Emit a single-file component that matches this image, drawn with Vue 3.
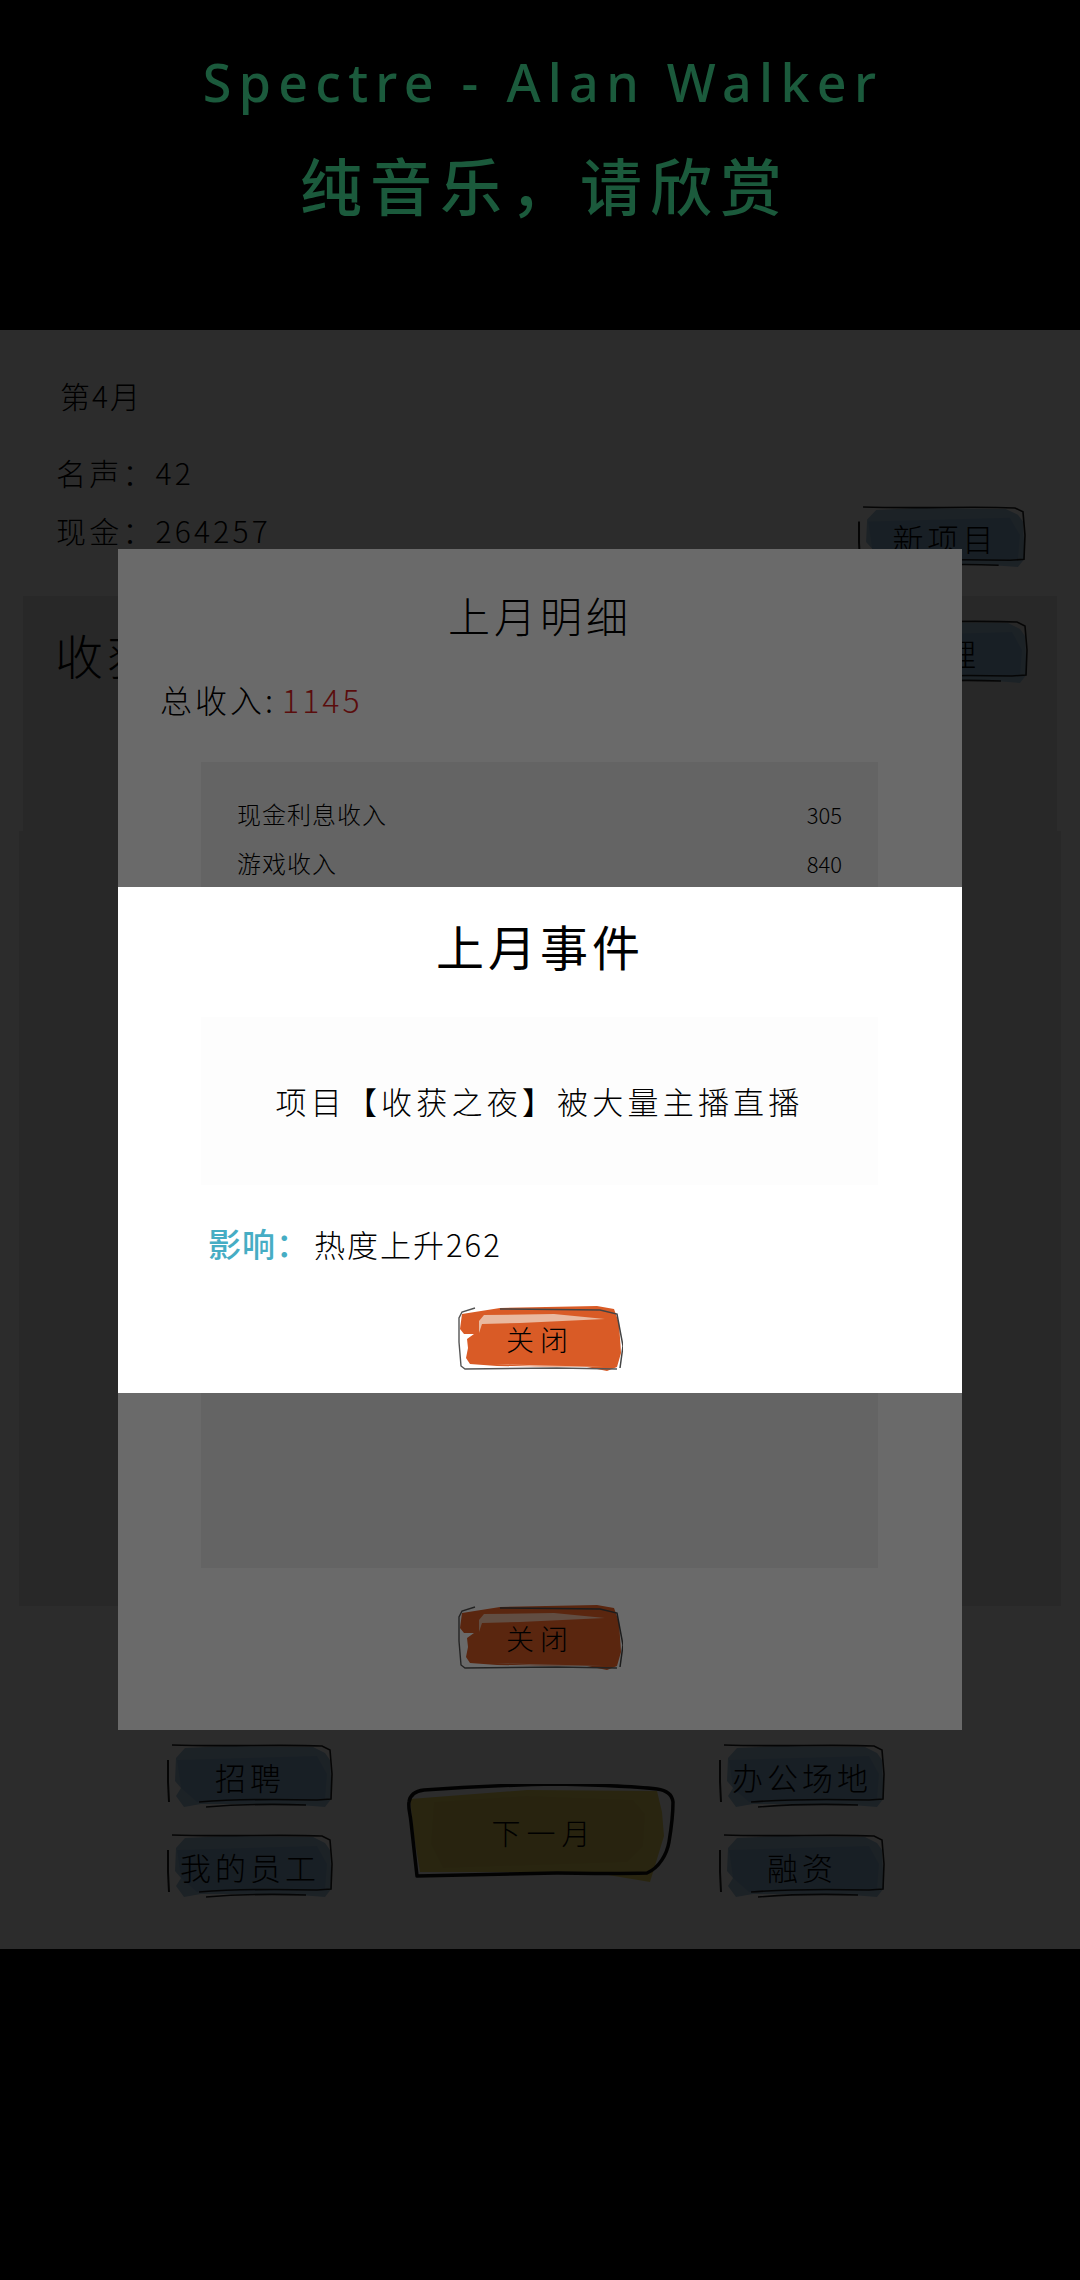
<template>
  <div class="screen">
    <!-- Shared hand drawn button art -->
    <svg class="sprites" width="0" height="0" aria-hidden="true">
      <symbol id="btn-blue" viewBox="0 0 166 66" preserveAspectRatio="none">
        <path d="M9 14 L18 4 L60 2 L146 3 L158 9 L163 16 L165 54 L158 63 L120 60 L34 60 L17 63 L9 52 L14 44 L8 37 Z" fill="#a5c6de" />
        <path d="M10 16 L150 12 L160 30 L158 56 L30 58 L14 44 L12 30 Z" fill="#8fb6d6" />
        <path d="M5 1 C60 3 110 0 155 2 L163 6 L165 30 L164 55 L150 56 C110 55 70 55 32 58" fill="none" stroke="#222" stroke-width="1.6" />
        <path d="M39 63 C75 60 110 60 139 61" fill="none" stroke="#222" stroke-width="1.6" />
        <path d="M1 16 L1 38 L2 58" fill="none" stroke="#222" stroke-width="2" />
      </symbol>
      <symbol id="btn-orange" viewBox="0 0 166 66" preserveAspectRatio="none">
        <path d="M5 8 L43 2 L140 0 L157 3 L162 17 L164 47 L160 61 L150 65 L130 61 L40 60 L13 58 L9 52 L11 42 L10 33 L17 28 L7 28 L3 23 Z" fill="#d95b26" />
        <path d="M22 27 L22 15 L27 9 L97 8 L148 13 L63 17 L25 18 Z" fill="#e9b9a0" />
        <path d="M37 58 L147 61 L90 61 Z" fill="#efb59b" />
        <path d="M43 3 L143 4 L160 8 L166 40 L163 62" fill="none" stroke="#444" stroke-width="1.5" />
        <path d="M18 2 L5 6 L2 12 L2 36 L4 60 L8 63 L100 62 L160 63" fill="none" stroke="#555" stroke-width="1.4" />
      </symbol>
      <symbol id="btn-yellow" viewBox="0 0 268 100" preserveAspectRatio="none">
        <path d="M3 15 L120 6 L250 7 L255 28 L257 52 L247 85 L243 98 L183 88 L13 88 L7 52 Z" fill="#eed861" />
        <path d="M27 18 L120 12 L226 16 L238 30 L236 62 L220 78 L36 84 L24 60 Z" fill="#e8d058" />
        <path d="M4 38 C3 28 1 24 2 18 C3 10 9 7 17 6 C60 3 100 1 150 0 C190 1 225 2 250 5 C258 6 265 10 266 18 C266 32 264 46 262 58 C260 70 252 84 240 89 C200 90 170 89 150 89 L10 92 Z" fill="none" stroke="#111" stroke-width="3.5" stroke-linejoin="round" />
      </symbol>
    </svg>

    <header class="banner">
      <p class="song">Spectre - Alan Walker</p>
      <p class="note">纯音乐，请欣赏</p>
    </header>

    <main class="stage">
      <section class="game">
        <p class="month">第4月</p>
        <div class="stats">
          <div>
            <p class="stat">名声：42</p>
            <p class="stat stat--cash">现金：264257</p>
          </div>
          <button class="btn btn--new">
            <svg class="btn__art"><use href="#btn-blue" /></svg>
            <span class="btn__label">新项目</span>
          </button>
        </div>

        <div class="project">
          <h2 class="project__name">收获之夜</h2>
          <button class="btn">
            <svg class="btn__art"><use href="#btn-blue" /></svg>
            <span class="btn__label">管理</span>
          </button>
        </div>
        <div class="list"></div>

        <div class="actions">
          <div class="actions__col">
            <button v-for="name in leftActions" :key="name" class="btn btn--action">
              <svg class="btn__art"><use href="#btn-blue" /></svg>
              <span class="btn__label">{{ name }}</span>
            </button>
          </div>
          <button class="btn btn--next">
            <svg class="btn__art"><use href="#btn-yellow" /></svg>
            <span class="btn__label">下一月</span>
          </button>
          <div class="actions__col">
            <button v-for="name in rightActions" :key="name" class="btn btn--action">
              <svg class="btn__art"><use href="#btn-blue" /></svg>
              <span class="btn__label">{{ name }}</span>
            </button>
          </div>
        </div>
      </section>

      <!-- Monthly detail dialog -->
      <div class="mask">
        <div class="dialog dialog--detail">
          <h3 class="detail__title">上月明细</h3>
          <p class="detail__total">总收入:<span class="detail__sum">1145</span></p>
          <div class="detail__box">
            <div v-for="row in incomeRows" :key="row.name" class="detail__row">
              <span>{{ row.name }}</span>
              <span class="detail__value">{{ row.value }}</span>
            </div>
          </div>
          <button class="btn btn--close detail__close">
            <svg class="btn__art"><use href="#btn-orange" /></svg>
            <span class="btn__label">关闭</span>
          </button>
        </div>
      </div>

      <!-- Event dialog -->
      <div class="mask">
        <div class="dialog dialog--event">
          <h3 class="event__title">上月事件</h3>
          <div class="event__box">项目【收获之夜】被大量主播直播</div>
          <p class="event__effect"><span class="event__label">影响：</span>热度上升262</p>
          <button class="btn btn--close event__close">
            <svg class="btn__art"><use href="#btn-orange" /></svg>
            <span class="btn__label">关闭</span>
          </button>
        </div>
      </div>
    </main>

    <footer class="bottom"></footer>
  </div>
</template>

<script setup>
const leftActions = ['招聘', '我的员工']
const rightActions = ['办公场地', '融资']

const incomeRows = [
  { name: '现金利息收入', value: 305 },
  { name: '游戏收入', value: 840 }
]
</script>

<style>
html,
body {
  background: #000;
}
</style>

<style scoped>
.screen {
  width: 1080px;
  height: 2280px;
  display: flex;
  flex-direction: column;
  background: #000;
  font-family: "Noto Sans CJK SC", "Noto Sans", sans-serif;
  font-weight: 300;
  color: #000;
  overflow: hidden;
}

p,
h2,
h3 {
  margin: 0;
  font-weight: 300;
}

.sprites {
  position: absolute;
}

.banner {
  height: 330px;
  flex: none;
  padding-top: 50px;
  box-sizing: border-box;
  text-align: center;
  color: #1b5a3c;
}

.song {
  padding-left: 6px;
  font-family: "Noto Sans", sans-serif;
  font-size: 52px;
  line-height: 64px;
  letter-spacing: 7.3px;
  font-weight: 500;
}

.note {
  margin-top: 30px;
  padding-left: 10px;
  font-size: 62px;
  line-height: 80px;
  letter-spacing: 8px;
  font-weight: 500;
}

.stage {
  position: relative;
  height: 1619px;
  flex: none;
}

.game {
  height: 100%;
  padding-top: 45px;
  box-sizing: border-box;
  background: #fff;
}

.month {
  padding-left: 60px;
  font-size: 30px;
  line-height: 40px;
  letter-spacing: 2px;
}

.stats {
  margin-top: 37px;
  padding: 0 54px 0 56px;
  display: flex;
  justify-content: space-between;
  align-items: flex-end;
}

.stat {
  font-size: 30px;
  line-height: 40px;
  letter-spacing: 3.2px;
}

.stat--cash {
  margin: 18px 0 20px;
}

.project {
  height: 235px;
  margin: 26px 23px 0;
  padding: 24px 29px 0 32px;
  box-sizing: border-box;
  display: flex;
  justify-content: space-between;
  align-items: flex-start;
  background: #e8e8e8;
}

.project__name {
  font-size: 48px;
  line-height: 68px;
  letter-spacing: 4px;
}

.list {
  height: 775px;
  margin: 0 19px;
  background: #e8e8e8;
}

.actions {
  margin-top: 138px;
  padding-left: 167px;
  display: flex;
  align-items: center;
}

.actions__col {
  display: flex;
  flex-direction: column;
  gap: 24px;
}

.btn {
  position: relative;
  width: 166px;
  height: 66px;
  padding: 0;
  border: 0;
  display: flex;
  align-items: center;
  justify-content: center;
  flex: none;
  background: none;
  font: inherit;
  color: #000;
}

.btn__art {
  position: absolute;
  inset: 0;
  width: 100%;
  height: 100%;
  overflow: visible;
}

.btn__label {
  position: relative;
  font-size: 31px;
  line-height: 40px;
  letter-spacing: 4px;
}

.btn--new {
  width: 168px;
  height: 64px;
}

.btn--new .btn__label {
  left: 3px;
}

.btn--next {
  width: 268px;
  height: 100px;
  margin: 24px 44px 0 74px;
}

.btn--next .btn__label {
  font-size: 29px;
  letter-spacing: 6px;
  left: 3px;
  top: -2px;
}

.btn--close .btn__label {
  font-size: 28px;
  letter-spacing: 6px;
}

.mask {
  position: absolute;
  inset: 0;
  display: flex;
  align-items: center;
  justify-content: center;
  background: rgba(0, 0, 0, 0.585);
}

.dialog {
  width: 844px;
  box-sizing: border-box;
  background: #fff;
}

.dialog--detail {
  height: 1181px;
  padding-top: 36px;
}

.detail__title {
  text-align: center;
  font-size: 42px;
  line-height: 60px;
  letter-spacing: 4px;
}

.detail__total {
  margin-top: 32px;
  padding-left: 42px;
  font-size: 32px;
  line-height: 44px;
  letter-spacing: 3px;
}

.detail__sum {
  margin-left: 6px;
  color: #d81e1e;
}

.detail__box {
  height: 806px;
  margin: 41px 84px 0 83px;
  padding: 34px 36px;
  box-sizing: border-box;
  background: #f0f0f0;
}

.detail__row {
  height: 49px;
  display: flex;
  justify-content: space-between;
  font-size: 24px;
  line-height: 36px;
  letter-spacing: 1px;
}

.detail__value {
  font-size: 22px;
  letter-spacing: 0;
}

.detail__close {
  margin: 37px auto 0;
}

.dialog--event {
  height: 506px;
  padding-top: 23px;
}

.event__title {
  text-align: center;
  font-size: 48px;
  line-height: 70px;
  letter-spacing: 4px;
  font-weight: 400;
}

.event__box {
  height: 168px;
  margin: 37px 84px 0 83px;
  display: flex;
  align-items: center;
  justify-content: center;
  background: #fdfdfd;
  font-size: 31px;
  letter-spacing: 4.2px;
}

.event__effect {
  margin-top: 33px;
  padding-left: 90px;
  font-size: 31px;
  line-height: 50px;
  letter-spacing: 2px;
}

.event__label {
  color: #46adc4;
  font-weight: 500;
  font-size: 33px;
  letter-spacing: 1px;
  margin-right: 4px;
}

.event__close {
  margin: 37px auto 0;
}

.bottom {
  flex: 1;
  background: #000;
}
</style>
